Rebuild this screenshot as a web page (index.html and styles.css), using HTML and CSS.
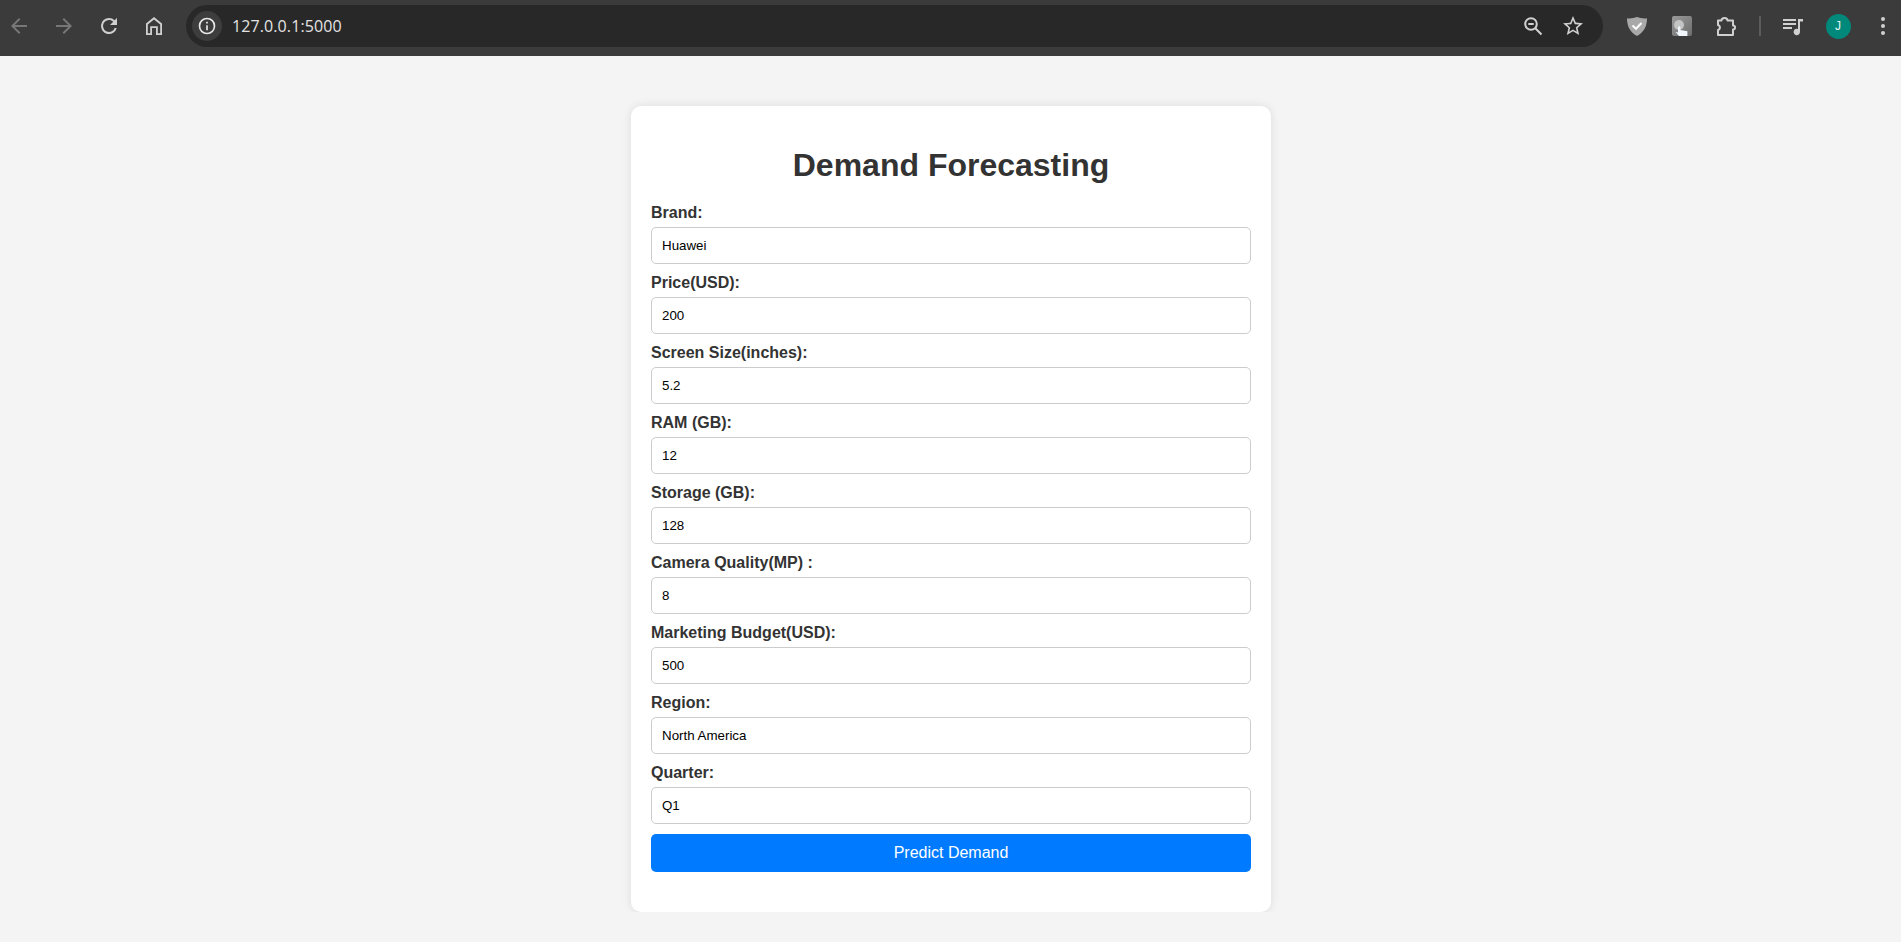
FILE: index.html
```html
<!DOCTYPE html>
<html lang="en">
<head>
  <meta charset="UTF-8">
  <meta name="viewport" content="width=device-width, initial-scale=1.0">
  <title>Demand Forecasting</title>
  <link rel="stylesheet" href="styles.css">
</head>
<body>
<header class="toolbar">
  <div class="nav-icons">
    <svg class="icon dim" viewBox="0 0 24 24"><path d="M20 11H7.800l5.600-5.600L12 4l-8 8 8 8 1.400-1.400L7.800 13H20z"/></svg>
    <svg class="icon dim" viewBox="0 0 24 24"><path d="M4 11h12.200l-5.600-5.600L12 4l8 8-8 8-1.400-1.400 5.600-5.600H4z"/></svg>
    <svg class="icon" viewBox="0 0 24 24"><path d="M17.650 6.350A8 8 0 0 0 12 4a8 8 0 1 0 7.730 10h-2.080A6 6 0 1 1 12 6c1.660 0 3.140.690 4.220 1.780L13 11h7V4z"/></svg>
    <svg class="icon" viewBox="0 0 24 24"><path fill-rule="evenodd" d="M12 3 4 9.500V21h6v-7h4v7h6V9.500zm0 2.400 6.200 5v8.800h-2.400v-7H8.200v7H5.800v-8.800z"/></svg>
  </div>
  <div class="omnibox">
    <span class="info-chip">
      <svg class="icon small" viewBox="0 0 24 24"><path d="M11 7h2v2h-2zm0 4h2v6h-2zm1-9a10 10 0 1 0 0 20 10 10 0 0 0 0-20zm0 18a8 8 0 1 1 0-16 8 8 0 0 1 0 16z"/></svg>
    </span>
    <span class="url">127.0.0.1:5000</span>
    <div class="omni-actions">
      <svg class="icon line" viewBox="0 0 24 24"><circle cx="10" cy="10" r="5.800"/><path d="M14.300 14.300 20.500 20.500M7.300 10h5.400"/></svg>
      <svg class="icon" viewBox="0 0 24 24"><path d="M22 9.240l-7.190-.62L12 2 9.190 8.630 2 9.240l5.460 4.730L5.820 21 12 17.270 18.180 21l-1.630-7.030zM12 15.400l-3.760 2.270 1-4.280-3.320-2.880 4.380-.38L12 6.100l1.710 4.040 4.380.38-3.320 2.880 1 4.280z"/></svg>
    </div>
  </div>
  <div class="ext-icons">
    <svg class="icon ext" viewBox="0 0 24 24"><path fill="#a8a8a8" d="M12 3c3 1.200 6.500 1.800 10 1.300 0 8-3 14-10 17.700C5 18.300 2 12.300 2 4.300 5.500 4.800 9 4.200 12 3z"/><path fill="none" stroke="#fafafa" stroke-width="2.200" d="M7.500 11.500l3.500 3.200 5.500-5.700"/></svg>
    <span class="touch-ext">
      <svg viewBox="0 0 20 20"><circle cx="7" cy="9" r="5" fill="#c4c4c4"/><path fill="#f0f6fc" d="M6 11q1.200-1.500 2.400 0v3l7 1.200V20H7l-3.500-4 2.500.6z"/></svg>
    </span>
    <svg class="icon line" viewBox="0 0 24 24"><path d="M4 6.500h3.500c0-3.500 6-3.500 6 0h5.500v5c2.700 0 2.700 4 0 4v5.500H4v-5c2.500-.5 2.500-4.500 0-5z"/></svg>
    <span class="divider"></span>
    <svg class="icon" viewBox="0 0 24 24"><path d="M2 5h13v2H2zm0 4h13v2H2zm0 4h9v2H2zm15-8h5v2.500h-3V18a3.200 3.200 0 1 1-2-3z"/></svg>
    <span class="avatar">J</span>
    <svg class="icon" viewBox="0 0 24 24"><circle cx="12" cy="5" r="2"/><circle cx="12" cy="12" r="2"/><circle cx="12" cy="19" r="2"/></svg>
  </div>
</header>

<main class="page">
  <div class="container">
    <h1>Demand Forecasting</h1>
    <form class="forecast-form">
      <label for="brand">Brand:</label>
      <input type="text" id="brand" value="Huawei">
      <label for="price">Price(USD):</label>
      <input type="text" id="price" value="200">
      <label for="screen">Screen Size(inches):</label>
      <input type="text" id="screen" value="5.2">
      <label for="ram">RAM (GB):</label>
      <input type="text" id="ram" value="12">
      <label for="storage">Storage (GB):</label>
      <input type="text" id="storage" value="128">
      <label for="camera">Camera Quality(MP) :</label>
      <input type="text" id="camera" value="8">
      <label for="budget">Marketing Budget(USD):</label>
      <input type="text" id="budget" value="500">
      <label for="region">Region:</label>
      <input type="text" id="region" value="North America">
      <label for="quarter">Quarter:</label>
      <input type="text" id="quarter" value="Q1">
      <button type="submit">Predict Demand</button>
    </form>
  </div>
</main>
</body>
</html>
```

FILE: styles.css
```css
body {
  font-family: "Liberation Sans", Arial, sans-serif;
  margin: 0;
  background-color: #f4f4f4;
  overflow: hidden;
}
.toolbar {
  display: flex;
  align-items: center;
  height: 56px;
  box-sizing: border-box;
  padding-left: 7px;
  padding-bottom: 4px;
  background: #3b3b3b;
}
.icon {
  width: 24px;
  height: 24px;
  fill: #d0d0d0;
  flex: none;
}
.icon.dim {
  fill: #777;
}
.icon.small {
  width: 20px;
  height: 20px;
  fill: #e8e8e8;
}
.icon.line {
  fill: none;
  stroke: #d0d0d0;
  stroke-width: 2;
  stroke-linejoin: round;
}
.nav-icons {
  display: flex;
  gap: 21px;
  width: 179px;
}
.omnibox {
  display: flex;
  align-items: center;
  width: 1417px;
  height: 42px;
  box-sizing: border-box;
  padding: 0 18px 0 6px;
  border-radius: 21px;
  background: #282828;
}
.info-chip {
  display: flex;
  align-items: center;
  justify-content: center;
  width: 30px;
  height: 30px;
  border-radius: 50%;
  background: #3d3d3d;
}
.url {
  margin-left: 10px;
  color: #e3e3e3;
  font-family: "Open Sans", sans-serif;
  font-size: 16px;
  letter-spacing: 0.1px;
}
.omni-actions {
  display: flex;
  gap: 16px;
  margin-left: auto;
}
.ext-icons {
  display: flex;
  align-items: center;
  margin-left: 22px;
  gap: 20.5px;
}
.touch-ext {
  display: block;
  width: 20px;
  height: 20px;
  margin: 0 2px;
  border-radius: 2px;
  overflow: hidden;
  background: linear-gradient(135deg, #9a9a9a, #6e6e6e);
}
.touch-ext svg {
  display: block;
}
.divider {
  width: 2px;
  height: 20px;
  background: #5c5c5c;
}
.avatar {
  width: 25px;
  height: 25px;
  border-radius: 50%;
  background: #00897b;
  color: #e6f5f3;
  font-size: 12px;
  line-height: 25px;
  text-align: center;
}
.page {
  padding-left: 1px;
}
.container {
  width: 600px;
  margin: 50px auto 0;
  padding: 20px 20px 40px;
  background: white;
  border-radius: 10px;
  box-shadow: 0 0 10px rgba(0, 0, 0, 0.1);
}
h1 {
  margin: 21px 0 20px;
  color: #333;
  font-size: 32px;
  text-align: center;
}
label {
  display: block;
  margin-bottom: 5px;
  color: #333;
  font-weight: bold;
}
input {
  display: block;
  width: 100%;
  box-sizing: border-box;
  padding: 10px;
  margin-bottom: 10px;
  border: 1px solid #ccc;
  border-radius: 5px;
  font-family: inherit;
}
button {
  display: block;
  width: 100%;
  padding: 10px;
  background-color: #007bff;
  color: white;
  border: none;
  border-radius: 5px;
  font-family: inherit;
  font-size: 16px;
}
```
